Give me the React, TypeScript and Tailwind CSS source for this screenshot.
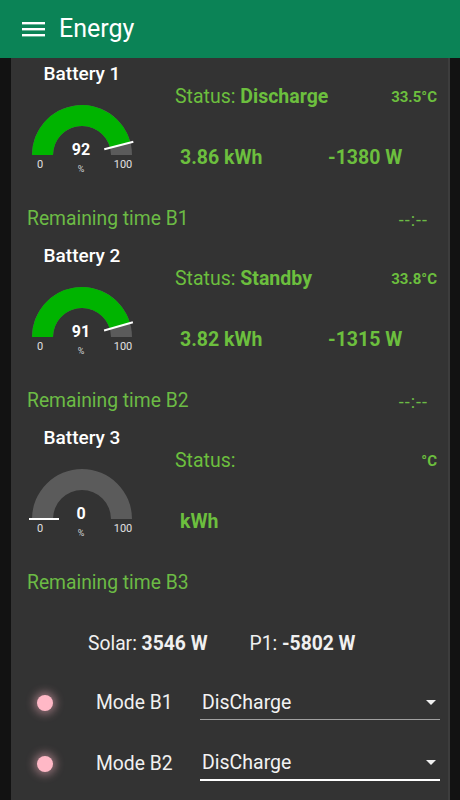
import React from 'react';

type Battery = {
  name: string;
  soc: number;
  status: string;
  temp: string;
  kwh: string;
  power: string;
  remaining: string;
};

const batteries: Battery[] = [
  { name: 'Battery 1', soc: 92, status: 'Discharge', temp: '33.5', kwh: '3.86', power: '-1380 W', remaining: '--:--' },
  { name: 'Battery 2', soc: 91, status: 'Standby', temp: '33.8', kwh: '3.82', power: '-1315 W', remaining: '--:--' },
  { name: 'Battery 3', soc: 0, status: '', temp: '', kwh: '', power: '', remaining: '' },
];

// half-ring gauge, center at (65,69)
function Gauge({ value }: { value: number }) {
  const cx = 65;
  const cy = 69;
  const ro = 50;
  const ri = 29;
  const pt = (r: number, a: number) => `${(cx + r * Math.cos(a)).toFixed(2)} ${(cy - r * Math.sin(a)).toFixed(2)}`;
  const seg = (a0: number, a1: number) =>
    `M ${pt(ro, a0)} A ${ro} ${ro} 0 0 1 ${pt(ro, a1)} L ${pt(ri, a1)} A ${ri} ${ri} 0 0 0 ${pt(ri, a0)} Z`;
  const a = Math.PI * (1 - value / 100);
  return (
    <svg width="130" height="90" viewBox="0 0 130 90">
      <path d={seg(Math.PI, 0.0001)} fill="#5b5b5b" />
      {value > 0 && <path d={seg(Math.PI, a)} fill="#00b400" />}
      <line x1={cx + 23 * Math.cos(a)} y1={cy - 23 * Math.sin(a)} x2={cx + 53 * Math.cos(a)} y2={cy - 53 * Math.sin(a)} stroke="#ffffff" strokeWidth="2" />
      <text x={cx - 1} y={cy} textAnchor="middle" fill="#ffffff" fontSize="16" fontWeight="700">{value}</text>
      <text x="23" y="82" textAnchor="middle" fill="#e0e0e0" fontSize="11">0</text>
      <text x="106" y="82" textAnchor="middle" fill="#e0e0e0" fontSize="11">100</text>
      <text x={cx - 1} y="86" textAnchor="middle" fill="#d0d0d0" fontSize="9">%</text>
    </svg>
  );
}

function BatteryBlock({ b, idx }: { b: Battery; idx: number }) {
  return (
    <div className="pt-[4px] pb-[9px]">
      <div className="flex">
        <div className="w-[136px] pl-[6px] shrink-0">
          <div className="w-[130px] h-6 leading-6 text-center text-white text-[19px] font-medium">{b.name}</div>
          <Gauge value={b.soc} />
        </div>
        <div className="ml-[28px] mr-[10px] flex-1 flex flex-col text-[#6cbf3e]">
          <div className="mt-[23px] h-6 flex items-center justify-between">
            <span className="text-[19.5px]">
              Status: <span className="font-bold">{b.status}</span>
            </span>
            <span className="text-[15px] font-bold mr-[1px]">{b.temp}°C</span>
          </div>
          <div className="mt-[37px] h-6 flex items-center text-[19.5px] font-bold">
            <span className="pl-[5px] w-[153px]">{b.kwh ? `${b.kwh} kWh` : 'kWh'}</span>
            <span>{b.power}</span>
          </div>
        </div>
      </div>
      <div className="mt-[31px] h-6 flex items-center justify-between pl-[16px] pr-[20px] text-[#6cbb45] text-[19.3px]">
        <span>Remaining time B{idx + 1}</span>
        <span className="text-[18px] tracking-[1px]">{b.remaining}</span>
      </div>
    </div>
  );
}

function ModeRow({ label, value, focused }: { label: string; value: string; focused?: boolean }) {
  return (
    <div className="flex items-center h-[34px]">
      <div className="w-[42px] flex justify-end">
        <div className="w-4 h-4 rounded-full bg-[#ffb8c6] shadow-[0_0_8px_3px_rgba(255,182,198,0.45)]" />
      </div>
      <div className="ml-[43px] w-[104px] text-[19.3px] text-[#f0f0f0]">{label}</div>
      <div className={`w-[240px] h-[34px] flex items-center justify-between pl-[2px] pr-[4px] ${focused ? 'border-b-2 border-white' : 'border-b-[1.5px] border-[#a0a0a0]'}`}>
        <span className="text-[19.5px] text-[#f2f2f2]">{value}</span>
        <svg width="10" height="6" viewBox="0 0 10 6">
          <path d="M0 0 L10 0 L5 5 Z" fill="#f0f0f0" />
        </svg>
      </div>
    </div>
  );
}

export default function App() {
  return (
    <div className="w-[460px] h-[800px] overflow-hidden bg-[#121212] flex flex-col" style={{ fontFamily: 'Roboto, "Noto Sans", sans-serif' }}>
      <header className="h-[58px] shrink-0 bg-[#0b8356] flex items-center">
        <svg className="ml-[22px]" width="24" height="18" viewBox="0 0 24 18">
          <rect x="0" y="2" width="23" height="2.4" fill="#fff" />
          <rect x="0" y="8" width="23" height="2.4" fill="#fff" />
          <rect x="0" y="14" width="23" height="2.4" fill="#fff" />
        </svg>
        <h1 className="ml-[13px] text-white text-[25px] leading-none pb-[2px]">Energy</h1>
      </header>
      <div className="flex-1 flex">
        <main className="ml-[11px] w-[439px] bg-[#333333] border-r-2 border-[#3d3d3d]">
          {batteries.map((b, i) => (
            <BatteryBlock key={b.name} b={b} idx={i} />
          ))}
          <div className="mt-[28px] h-6 flex items-center text-[19.3px] text-[#f0f0f0]">
            <span className="ml-[77px]">
              Solar: <span className="font-bold">3546 W</span>
            </span>
            <span className="ml-[42px]">
              P1: <span className="font-bold">-5802 W</span>
            </span>
          </div>
          <div className="mt-[30px] flex flex-col gap-[27px]">
            <ModeRow label="Mode B1" value="DisCharge" />
            <ModeRow label="Mode B2" value="DisCharge" focused />
          </div>
        </main>
      </div>
    </div>
  );
}
